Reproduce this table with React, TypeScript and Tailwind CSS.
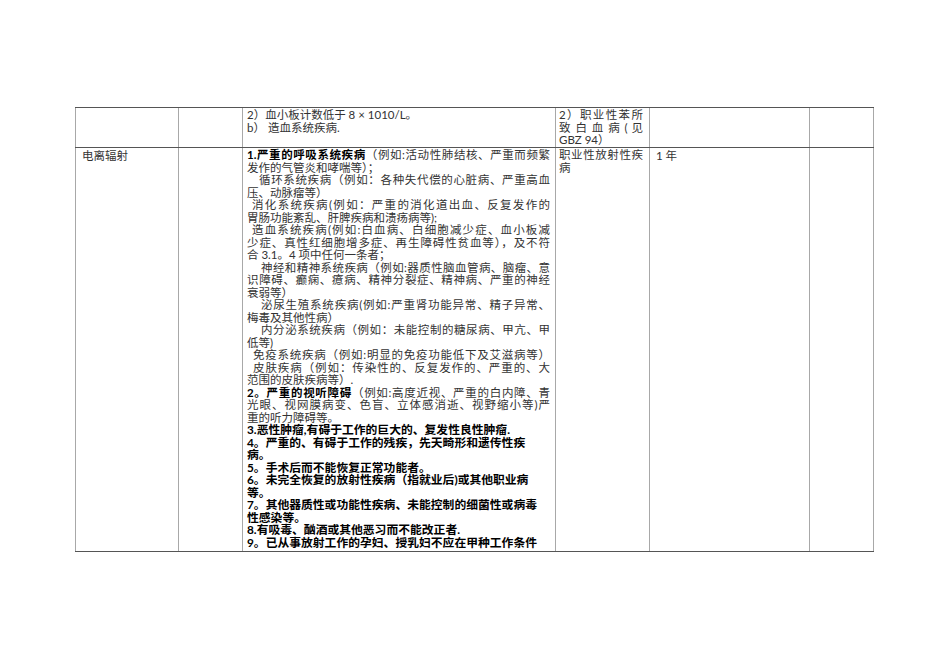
import React from 'react'

type Seg = { t: string, b?: boolean }
type Line = { s: Seg[], j?: boolean, ind?: string, bold?: boolean }

// indent classes written out in full
const IND: Record<string, string> = {
    a: 'pl-[5px]',
    b: 'pl-[6px]',
    c: 'pl-[12px]',
    d: 'pl-[14px]',
}

const lines: Line[] = [
    { s: [{ t: '1.严重的呼吸系统疾病', b: true }, { t: '（例如:活动性肺结核、严重而频繁' }], j: true },
    { s: [{ t: '发作的气管炎和哮喘等）；' }] },
    { s: [{ t: '循环系统疾病（例如：各种失代偿的心脏病、严重高血' }], j: true, ind: 'c' },
    { s: [{ t: '压、动脉瘤等）' }] },
    { s: [{ t: '消化系统疾病(例如：严重的消化道出血、反复发作的' }], j: true, ind: 'a' },
    { s: [{ t: '胃肠功能紊乱、肝脾疾病和溃疡病等);' }] },
    { s: [{ t: '造血系统疾病(例如:白血病、白细胞减少症、血小板减' }], j: true, ind: 'a' },
    { s: [{ t: '少症、真性红细胞增多症、再生障碍性贫血等），及不符' }], j: true },
    { s: [{ t: '合 3.1。4 项中任何一条者；' }] },
    { s: [{ t: '神经和精神系统疾病（例如:器质性脑血管病、脑瘤、意' }], j: true, ind: 'd' },
    { s: [{ t: '识障碍、癫痫、癔病、精神分裂症、精神病、严重的神经' }], j: true },
    { s: [{ t: '衰弱等）' }] },
    { s: [{ t: '泌尿生殖系统疾病(例如:严重肾功能异常、精子异常、' }], j: true, ind: 'd' },
    { s: [{ t: '梅毒及其他性病）' }] },
    { s: [{ t: '内分泌系统疾病（例如：未能控制的糖尿病、甲亢、甲' }], j: true, ind: 'd' },
    { s: [{ t: '低等)' }] },
    { s: [{ t: '免疫系统疾病（例如:明显的免疫功能低下及艾滋病等）' }], j: true, ind: 'b' },
    { s: [{ t: '皮肤疾病（例如：传染性的、反复发作的、严重的、大' }], j: true, ind: 'b' },
    { s: [{ t: '范围的皮肤疾病等）.' }] },
    { s: [{ t: '2。严重的视听障碍', b: true }, { t: '（例如:高度近视、严重的白内障、青' }], j: true },
    { s: [{ t: '光眼、视网膜病变、色盲、立体感消逝、视野缩小等)严' }], j: true },
    { s: [{ t: '重的听力障碍等。' }] },
    { s: [{ t: '3.恶性肿瘤,有碍于工作的巨大的、复发性良性肿瘤.' }], bold: true },
    { s: [{ t: '4。严重的、有碍于工作的残疾，先天畸形和遗传性疾' }], bold: true },
    { s: [{ t: '病。' }], bold: true },
    { s: [{ t: '5。手术后而不能恢复正常功能者。' }], bold: true },
    { s: [{ t: '6。未完全恢复的放射性疾病（指就业后)或其他职业病' }], bold: true },
    { s: [{ t: '等。' }], bold: true },
    { s: [{ t: '7。其他器质性或功能性疾病、未能控制的细菌性或病毒' }], bold: true },
    { s: [{ t: '性感染等。' }], bold: true },
    { s: [{ t: '8.有吸毒、酗酒或其他恶习而不能改正者.' }], bold: true },
    { s: [{ t: '9。已从事放射工作的孕妇、授乳妇不应在甲种工作条件' }], bold: true },
]

function TextLine({ line }: { line: Line }) {
    return (
        <div
            className={`whitespace-nowrap h-[12.5px] leading-[12.5px] ${line.j ? 'text-justify [text-align-last:justify]' : 'text-left'} ${line.ind ? IND[line.ind] : ''} ${line.bold ? 'font-bold text-[11.8px] text-black' : 'text-[11.5px]'}`}
        >
            {line.s.map((seg, i) => (
                <span key={i} className={seg.b ? 'font-bold text-black' : ''}>{seg.t}</span>
            ))}
        </div>
    )
}

export default function App() {
    return (
        <div
            className="w-[950px] h-[672px] bg-white pt-[107px] pl-[75px] text-[#333] text-[11.5px]"
            style={{ fontFamily: 'Lato, "Noto Sans CJK SC", sans-serif' }}
        >
            <div className="w-[799px]">
                {/* row 1 */}
                <div className="flex h-[40px] border-t border-[#555]">
                    <div className="w-[103px] border-l border-[#a8a8a8]"></div>
                    <div className="w-[64px] border-l border-[#a8a8a8]"></div>
                    <div className="w-[313px] border-l border-[#a8a8a8] pl-[4px] pr-[5px] leading-[13px]">
                        <div>2）血小板计数低于 8 × 1010/L。</div>
                        <div>b） 造血系统疾病.</div>
                    </div>
                    <div className="w-[94px] border-l border-[#a8a8a8] pl-[3px] pr-[6px] pt-[1px] leading-[12.5px]">
                        <div className="text-justify [text-align-last:justify] whitespace-nowrap">2）职业性苯所</div>
                        <div className="text-justify [text-align-last:justify] whitespace-nowrap">致 白 血 病 ( 见</div>
                        <div>GBZ 94）</div>
                    </div>
                    <div className="w-[160px] border-l border-[#a8a8a8]"></div>
                    <div className="w-[65px] border-l border-r border-[#a8a8a8]"></div>
                </div>

                {/* row 2 */}
                <div className="flex h-[405px] border-t border-b border-[#555]">
                    <div className="w-[103px] border-l border-[#a8a8a8] pl-[6px] pt-[1px] leading-[13px]">电离辐射</div>
                    <div className="w-[64px] border-l border-[#a8a8a8]"></div>
                    <div className="w-[313px] border-l border-[#a8a8a8] pl-[4px] pr-[5px] pt-[1px]">
                        {lines.map((l, i) => <TextLine key={i} line={l} />)}
                    </div>
                    <div className="w-[94px] border-l border-[#a8a8a8] pl-[3px] pr-[6px] pt-[1px] leading-[12.5px]">
                        <div className="text-justify [text-align-last:justify] whitespace-nowrap">职业性放射性疾</div>
                        <div>病</div>
                    </div>
                    <div className="w-[160px] border-l border-[#a8a8a8] pl-[6px] pt-[1px] leading-[13px]">1 年</div>
                    <div className="w-[65px] border-l border-r border-[#a8a8a8]"></div>
                </div>
            </div>
        </div>
    )
}
